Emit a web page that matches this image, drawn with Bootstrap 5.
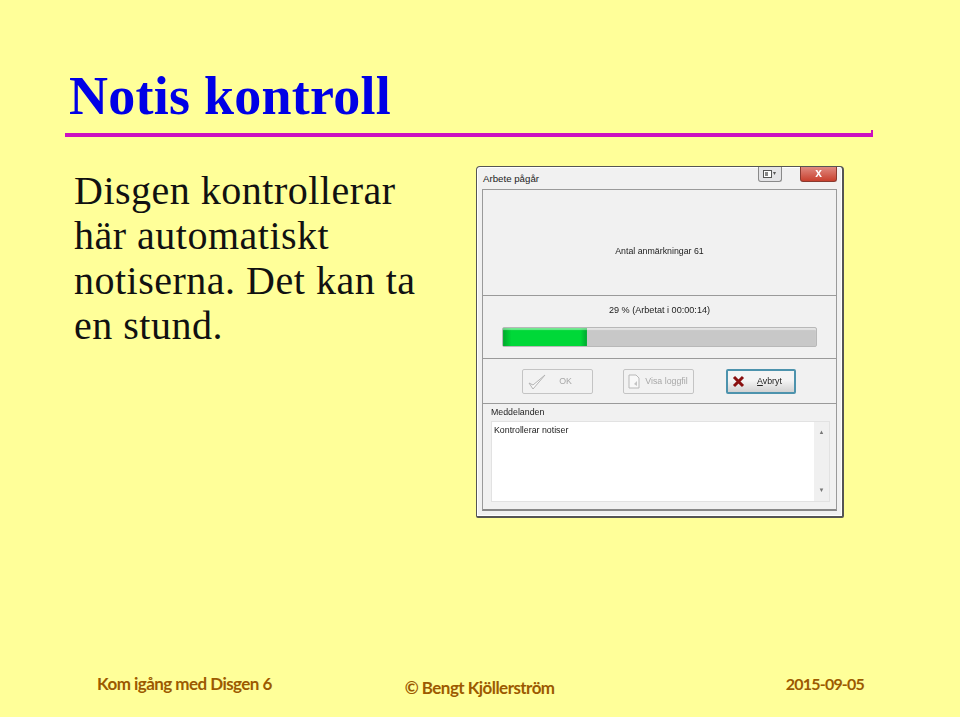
<!DOCTYPE html>
<html lang="sv">
<head>
    <meta charset="UTF-8">
    <meta name="viewport" content="width=device-width, initial-scale=1.0">
    <title>Notis kontroll</title>
    <link href="https://cdn.jsdelivr.net/npm/bootstrap@5.3.0/dist/css/bootstrap.min.css" rel="stylesheet">
    <style>
        body { background-color: #ffff99; margin: 0; }
        .slide { width: 960px; height: 717px; padding: 65px 87px 0 65px; overflow: hidden; }
        .slide-title { font-family: "Liberation Serif", serif; font-weight: 700; font-size: 54px; line-height: 62px; color: #0000e6; margin: 0 0 0 4px; letter-spacing: .25px; height: 68px; }
        .title-rule { height: 4px; background-color: #cc10c0; position: relative; }
        .title-rule::after { content: ""; position: absolute; right: 0; top: -3px; width: 2px; height: 3px; background-color: #cc10c0; }
        .slide-body { margin-top: 29px; }
        .slide-text { width: 350px; margin-left: 9px; padding-top: 3px; font-family: "Liberation Serif", serif; font-size: 40px; line-height: 44.9px; color: #111; letter-spacing: .5px; }
        .dlg { width: 368px; height: 352px; margin-left: 52px; background-color: #f1f1f1; border: 1px solid #555; border-width: 1px 2px 2px 1px; border-radius: 4px 4px 2px 2px; padding: 0 5px 5px 5px; box-shadow: inset 0 0 0 1px #fff; font-family: "Liberation Sans", sans-serif; font-size: 8.8px; color: #222; filter: blur(.3px); }
        .dlg-bar { height: 22px; font-size: 9.7px; }
        .dlg-title { padding: 5px 0 0 1px; }
        .dlg-min { width: 24px; height: 15px; background-color: #e4e4e6; border: 1px solid #8a8a8a; border-top: 0; border-radius: 0 0 3px 3px; margin-right: 18px; }
        .dlg-close { width: 37px; height: 15px; background: linear-gradient(#e08a80, #c8402e); border: 1px solid #8a3a30; border-top: 0; border-radius: 0 0 3px 3px; color: #fff; font-weight: 700; font-size: 12px; line-height: 12px; }
        .dlg-inner { height: 322px; border: 1px solid #9a9a9a; border-bottom: 2px solid #888; }
        .pane-count { height: 106px; border-bottom: 1px solid #9a9a9a; padding-top: 18px; }
        .pane-progress { height: 63px; border-bottom: 1px solid #9a9a9a; padding: 8px 19px 0; }
        .pane-label { font-size: 9.1px; }
        .bar-track { height: 20px; margin-top: 9px; background-color: #c8c8c8; border: 1px solid #b8b8b8; border-radius: 2px; box-shadow: inset 0 2px 1px rgba(255,255,255,.5); }
        .bar-fill { height: 100%; background: linear-gradient(90deg, #00a82c, #00d838 10%, #00d838 92%, #00a830); box-shadow: inset 0 2px 1px rgba(255,255,255,.45); }
        .pane-buttons { height: 45px; border-bottom: 1px solid #9a9a9a; padding: 10px 0 0 39px; gap: 30px; }
        .dlg-btn { width: 71px; height: 25px; background-color: #f2f2f2; border: 1px solid #c4c4c4; border-radius: 2px; color: #a8a8a8; }
        .dlg-btn-main { width: 70px; margin-left: 2px; background: linear-gradient(#f4f4f4 45%, #d2d2d2); border: 2px solid #4d93ad; color: #222; }
        .dlg-btn svg { flex: none; }
        .dlg-group { padding: 2px 6px 0 8px; }
        .group-label { height: 15px; line-height: 13px; }
        .log-box { height: 81px; background-color: #fff; border: 1px solid #e2e2e2; }
        .log-text { padding: 3px 2px; line-height: 11px; }
        .log-scroll { width: 15px; background-color: #f0f0f0; color: #777; font-size: 6px; padding: 6px 0; }
        .slide-foot { margin-top: 153px; padding-left: 32px; font-family: "Lato", sans-serif; font-weight: 700; font-size: 17px; color: #9c5a00; letter-spacing: -.55px; }
        .foot-mid { padding-top: 4px; margin-left: 133px; }
        .foot-date { margin-left: auto; margin-right: 9px; padding-top: 1px; font-size: 16px; letter-spacing: -.8px; }
    </style>
</head>
<body>
    <div class="slide d-flex flex-column">
        <h1 class="slide-title">Notis kontroll</h1>
        <div class="title-rule"></div>

        <div class="slide-body d-flex align-items-start">
            <div class="slide-text">Disgen kontrollerar här automatiskt notiserna. Det kan ta en stund.</div>

            <div class="dlg d-flex flex-column">
                <div class="dlg-bar d-flex align-items-start">
                    <span class="dlg-title flex-grow-1">Arbete pågår</span>
                    <div class="dlg-min d-flex align-items-center justify-content-center">
                        <svg width="14" height="8" viewBox="0 0 14 8"><rect x=".5" y=".5" width="8" height="7" fill="#fff" stroke="#555"/><rect x="2" y="2" width="3" height="4" fill="#888"/><path d="M10 2h3l-1.5 3z" fill="#555"/></svg>
                    </div>
                    <div class="dlg-close text-center">x</div>
                </div>
                <div class="dlg-inner">
                    <div class="pane-count d-flex align-items-center justify-content-center">Antal anmärkningar 61</div>
                    <div class="pane-progress">
                        <div class="pane-label text-center">29 % (Arbetat i 00:00:14)</div>
                        <div class="bar-track"><div class="bar-fill" style="width: 26.7%"></div></div>
                    </div>
                    <div class="pane-buttons d-flex">
                        <div class="dlg-btn d-flex align-items-center">
                            <svg class="ms-1" width="20" height="18" viewBox="0 0 20 18"><path d="M2 10l4 6L18 2 6 12z" fill="#fafafa" stroke="#b4b4b4"/></svg>
                            <span class="flex-grow-1 text-center pe-2">OK</span>
                        </div>
                        <div class="dlg-btn d-flex align-items-center">
                            <svg class="ms-1" width="12" height="15" viewBox="0 0 12 15"><path d="M1 1h7l3 3v10H1z" fill="#f8f8f8" stroke="#b8b8b8"/><path d="M6 10l3-3v5z" fill="#c4c4c4"/></svg>
                            <span class="flex-grow-1 text-center">Visa loggfil</span>
                        </div>
                        <div class="dlg-btn dlg-btn-main d-flex align-items-center">
                            <svg class="ms-1" width="13" height="13" viewBox="0 0 13 13"><path d="M2 2l9 9M11 2l-9 9" stroke="#8a1010" stroke-width="3"/></svg>
                            <span class="flex-grow-1 text-center"><u>A</u>vbryt</span>
                        </div>
                    </div>
                    <div class="dlg-group">
                        <div class="group-label">Meddelanden</div>
                        <div class="log-box d-flex">
                            <div class="log-text flex-grow-1">Kontrollerar notiser</div>
                            <div class="log-scroll d-flex flex-column justify-content-between text-center"><span>▲</span><span>▼</span></div>
                        </div>
                    </div>
                </div>
            </div>
        </div>

        <div class="slide-foot d-flex align-items-start">
            <span>Kom igång med Disgen 6</span>
            <span class="foot-mid">© Bengt Kjöllerström</span>
            <span class="foot-date">2015-09-05</span>
        </div>
    </div>
    <script src="https://cdn.jsdelivr.net/npm/bootstrap@5.3.0/dist/js/bootstrap.bundle.min.js"></script>
</body>
</html>
